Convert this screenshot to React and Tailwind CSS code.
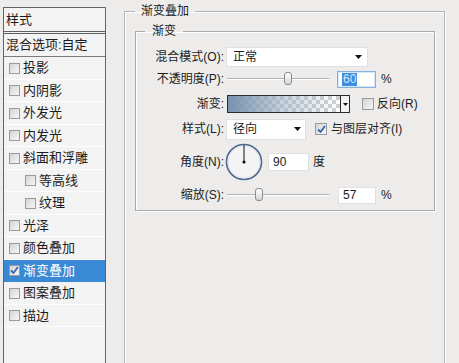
import React from "react";

const styleItems = [
  { label: "投影" },
  { label: "内阴影" },
  { label: "外发光" },
  { label: "内发光" },
  { label: "斜面和浮雕" },
  { label: "等高线", indent: true },
  { label: "纹理", indent: true },
  { label: "光泽" },
  { label: "颜色叠加" },
  { label: "渐变叠加", active: true, checked: true },
  { label: "图案叠加" },
  { label: "描边" },
];

function CheckBox({ checked, size = "w-[12px] h-[12px]" }) {
  return (
    <span
      className={`${size} shrink-0 border border-[#9a9a9a] bg-gradient-to-br from-[#d4d4d4] to-[#f7f7f7] flex items-center justify-center`}
    >
      {checked && (
        <svg width="9" height="9" viewBox="0 0 9 9">
          <path d="M1 4.5 L3.5 7 L8 1" fill="none" stroke="#3565b5" strokeWidth="1.8" />
        </svg>
      )}
    </span>
  );
}

function Arrow() {
  return (
    <svg width="7" height="4" viewBox="0 0 7 4" className="shrink-0">
      <polygon points="0,0 7,0 3.5,4" fill="#111" />
    </svg>
  );
}

function Slider({ thumb }) {
  return (
    <div className="relative w-[102px] h-[14px] ml-[3px]">
      <div className="absolute left-0 right-0 top-[6px] h-[1px] bg-[#b4b4b4]" />
      <div className="absolute left-0 right-0 top-[7px] h-[1px] bg-white" />
      <div
        className="absolute top-0 w-[8px] h-[13px] rounded-[3px] border border-[#8c8c8c] bg-gradient-to-b from-white to-[#d6d6d6]"
        style={{ left: thumb }}
      />
    </div>
  );
}

function Label({ children }) {
  return <div className="w-[88px] shrink-0 text-right whitespace-nowrap">{children}</div>;
}

export default function App() {
  return (
    <div className="w-[459px] h-[363px] overflow-hidden bg-[#edecea] flex font-['Liberation_Sans','Noto_Sans_CJK_SC',sans-serif] text-[12px] text-[#1c1c1c]">
      {/* left list */}
      <div className="ml-[3px] mt-[7px] w-[103px] h-[400px] shrink-0 border border-[#646464] bg-[#f3f3f3] text-[13px]">
        <div className="h-[26px] flex items-center pl-[2px] border-b-[3px] border-double border-[#5f5f5f]">
          样式
        </div>
        <div className="h-[23px] flex items-center pl-[2px] border-b border-[#7a7a7a] whitespace-nowrap">
          混合选项:自定
        </div>
        {styleItems.map((item, i) => (
          <div
            key={item.label}
            className={`${i % 2 === 0 ? "h-[23px]" : "h-[22px]"} flex items-center border-b ${
              item.active ? "bg-[#3a89d4] text-white border-[#3a89d4]" : "border-[#fdfdfd]"
            } ${item.indent ? "pl-[21px]" : "pl-[5px]"}`}
          >
            <CheckBox checked={item.checked} size="w-[11px] h-[11px]" />
            <span className="ml-[3px] whitespace-nowrap">{item.label}</span>
          </div>
        ))}
      </div>

      {/* right settings */}
      <fieldset className="ml-[18px] mt-[3px] w-[321px] h-[380px] shrink-0 border border-[#b3b3b3] shadow-[inset_1px_1px_0_#fff,1px_1px_0_#fff] pl-[10px] pr-[8px] pt-[4px]">
        <legend className="px-[6px] leading-[16px]">渐变叠加</legend>
        <fieldset className="w-[300px] border border-[#a9a9a9] shadow-[inset_1px_1px_0_#fff,1px_1px_0_#fff] pt-[7px] pb-[4px]">
          <legend className="ml-[9px] px-[7px] leading-[16px]">渐变</legend>

          <div className="h-[22px] flex items-center">
            <Label>混合模式(O):</Label>
            <div className="ml-[2px] w-[142px] h-[20px] bg-white border border-[#e0e0e0] flex items-center justify-between pl-[6px] pr-[5px]">
              <span>正常</span>
              <Arrow />
            </div>
          </div>

          <div className="h-[22px] flex items-center">
            <Label>不透明度(P):</Label>
            <Slider thumb={57} />
            <div className="ml-[8px] w-[39px] h-[17px] bg-white border border-[#86b0de] shadow-[inset_0_0_0_1px_#d8e8f8] flex items-center pl-[4px]">
              <span className="bg-[#3d8ee0] text-[#d4e6fb] leading-[13px] px-[1px]">60</span>
            </div>
            <span className="ml-[5px]">%</span>
          </div>

          <div className="h-[22px] mt-[3px] flex items-center">
            <Label>渐变:</Label>
            <div className="ml-[3px] w-[123px] h-[18px] border border-[#2b2b2b] flex">
              <div className="flex-1 bg-[conic-gradient(#cfcfcf_25%,#fff_0_50%,#cfcfcf_0_75%,#fff_0)] bg-[length:8px_8px]">
                <div className="w-full h-full bg-gradient-to-r from-[#7892ae] via-[#a3b6ca]/60 to-transparent" />
              </div>
              <div className="w-[9px] border-l border-[#2b2b2b] bg-[#f2f2f2] flex items-center justify-center">
                <svg width="5" height="3" viewBox="0 0 5 3">
                  <polygon points="0,0 5,0 2.5,3" fill="#111" />
                </svg>
              </div>
            </div>
            <span className="ml-[12px]">
              <CheckBox />
            </span>
            <span className="ml-[3px] whitespace-nowrap">反向(R)</span>
          </div>

          <div className="h-[22px] mt-[3px] flex items-center">
            <Label>样式(L):</Label>
            <div className="ml-[2px] w-[80px] h-[21px] bg-white border border-[#e0e0e0] flex items-center justify-between pl-[6px] pr-[4px]">
              <span>径向</span>
              <Arrow />
            </div>
            <span className="ml-[9px]">
              <CheckBox checked />
            </span>
            <span className="ml-[4px] whitespace-nowrap">与图层对齐(I)</span>
          </div>

          <div className="h-[38px] mt-[3px] flex items-center">
            <Label>角度(N):</Label>
            <svg width="38" height="38" viewBox="0 0 38 38" className="ml-[1px] shrink-0">
              <circle cx="19" cy="19" r="17.5" fill="#f4f4f4" stroke="#4d6791" strokeWidth="1.6" />
              <circle cx="19" cy="19" r="16" fill="none" stroke="#dfe4ec" strokeWidth="1" />
              <line x1="19" y1="19" x2="19" y2="2" stroke="#111" strokeWidth="1" />
              <circle cx="19" cy="19" r="1.6" fill="#111" />
            </svg>
            <div className="ml-[5px] w-[41px] h-[18px] bg-white border border-[#e0e0e0] flex items-center pl-[4px]">
              90
            </div>
            <span className="ml-[4px]">度</span>
          </div>

          <div className="h-[22px] mt-[3px] flex items-center">
            <Label>缩放(S):</Label>
            <Slider thumb={28} />
            <div className="ml-[9px] w-[38px] h-[17px] bg-white border border-[#e0e0e0] flex items-center pl-[4px]">
              57
            </div>
            <span className="ml-[5px]">%</span>
          </div>
        </fieldset>
      </fieldset>
    </div>
  );
}
